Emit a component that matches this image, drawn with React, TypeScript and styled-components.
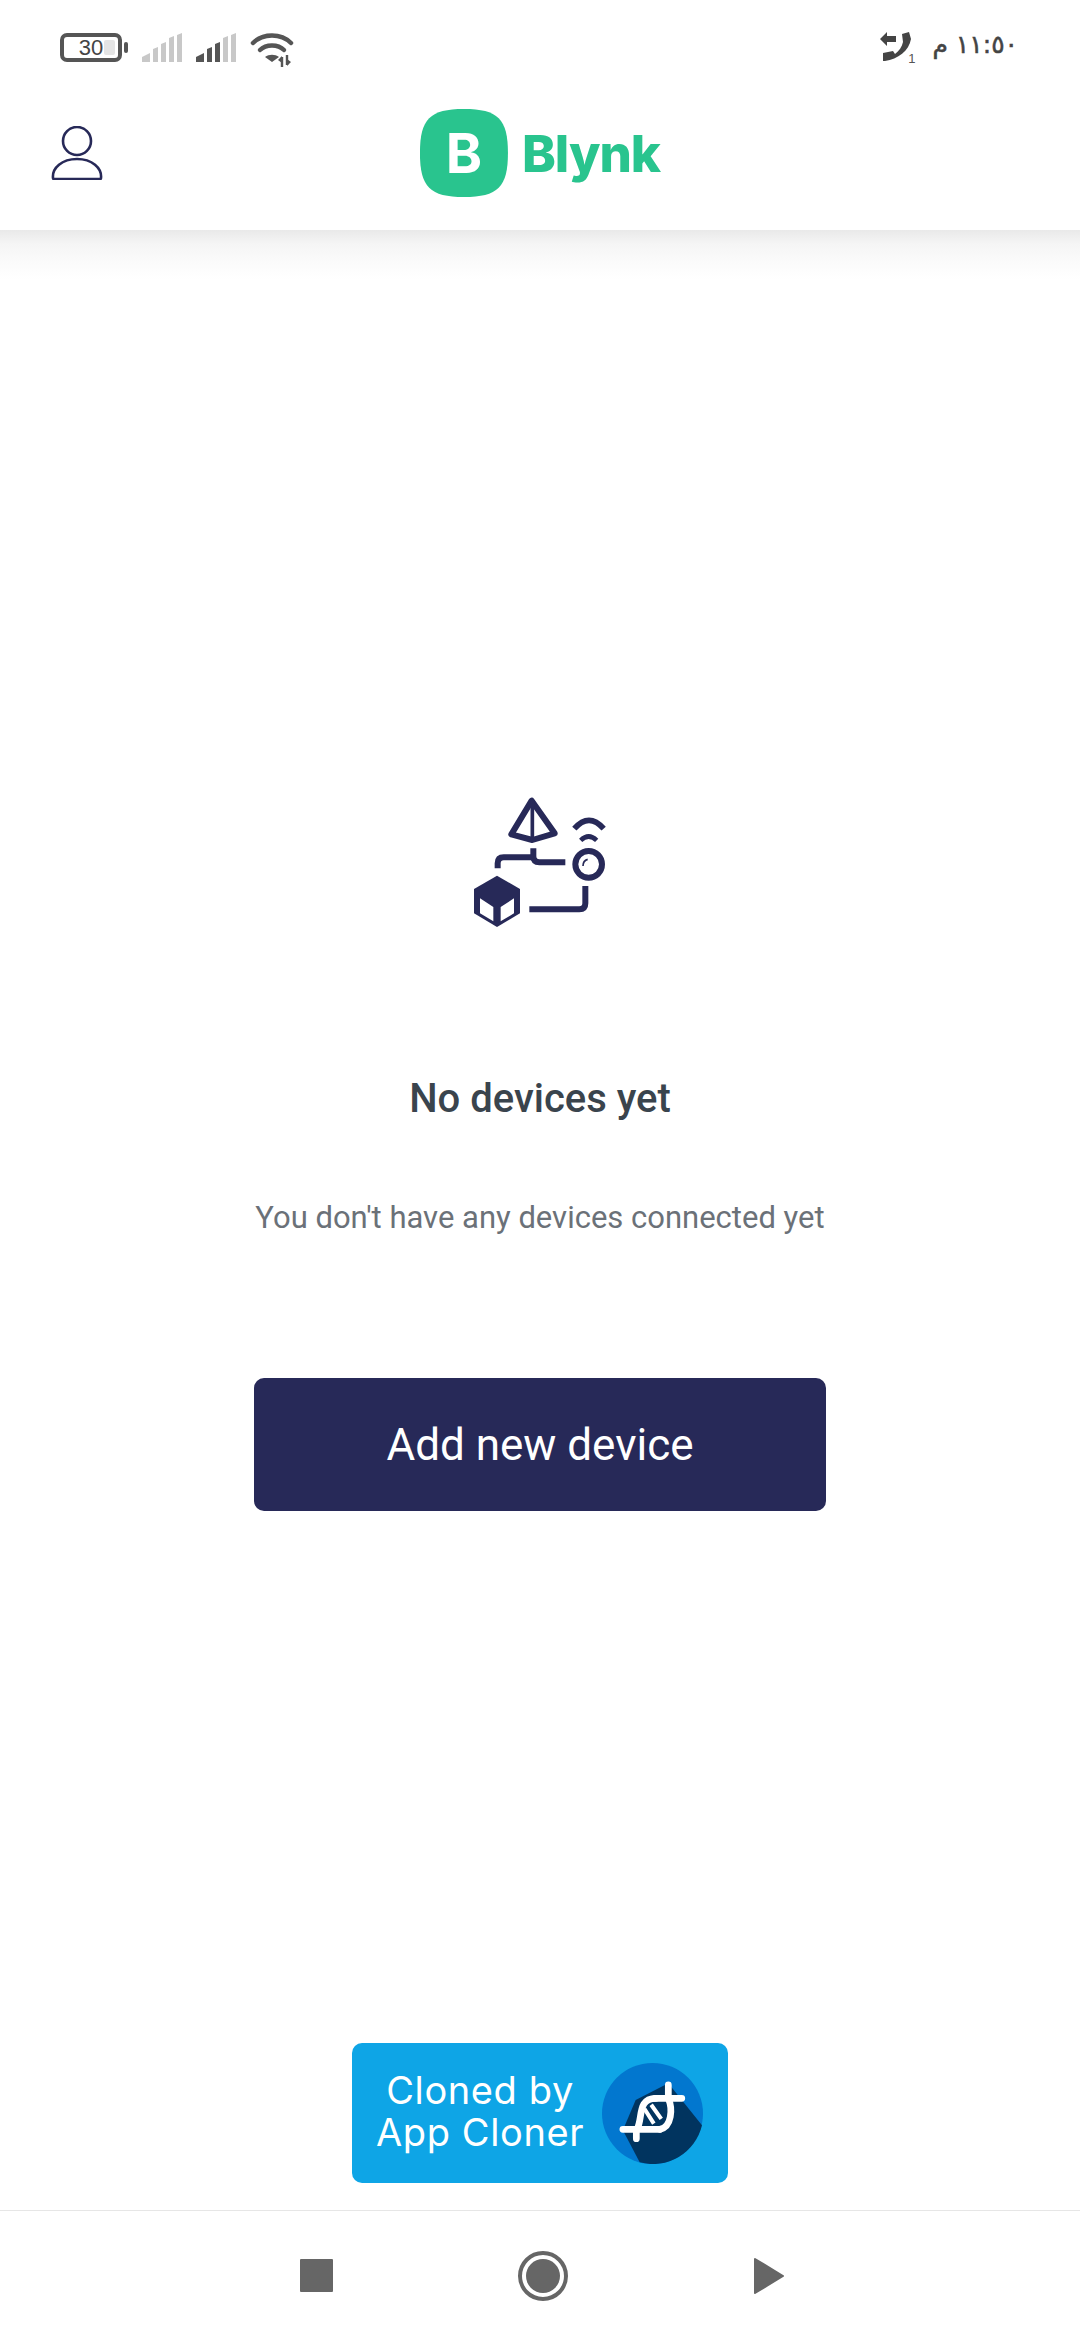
import styled, { createGlobalStyle } from 'styled-components'

const GlobalStyle = createGlobalStyle`
  html, body {
    margin: 0;
    padding: 0;
    background: #ffffff;
  }
  body {
    font-family: Roboto, "Liberation Sans", sans-serif;
  }
`

const Screen = styled.div`
  width: 1080px;
  height: 2340px;
  display: flex;
  flex-direction: column;
  background: #ffffff;
  overflow: hidden;
`

const StatusBar = styled.div`
  height: 90px;
  flex-shrink: 0;
  display: flex;
  justify-content: space-between;
  padding: 30px 62px 0 60px;
  box-sizing: border-box;
`

const StatusIcons = styled.div`
  display: flex;
  align-items: flex-start;
  gap: 14px;
  height: 40px;
  padding-top: 3px;
`

const BatteryBody = styled.div`
  position: relative;
  width: 62px;
  height: 29px;
  box-sizing: border-box;
  border: 4px solid #555555;
  border-radius: 7px;
  display: flex;
  align-items: center;
  justify-content: center;
  font-size: 22px;
  color: #444444;
  font-family: "Liberation Sans", sans-serif;
`

const BatteryFill = styled.div`
  position: absolute;
  top: 3px;
  bottom: 3px;
  right: 3px;
  width: 11px;
  background: #e4e4e4;
  border-radius: 2px;
`

const BatteryLevel = styled.span`
  position: relative;
  line-height: 1;
`

const BatteryCap = styled.div`
  width: 4px;
  height: 11px;
  margin: 9px 0 0 -12px;
  background: #555555;
  border-radius: 2px;
`

const Clock = styled.div`
  display: flex;
  align-items: flex-start;
  gap: 20px;
  color: #444444;
`

const CallBox = styled.div`
  position: relative;
  width: 32px;
  height: 30px;
  margin-top: 2px;
`

const SimIndex = styled.span`
  position: absolute;
  right: -3px;
  bottom: -3px;
  font-family: "Liberation Sans", sans-serif;
  font-size: 13px;
  line-height: 13px;
  color: #555555;
`

const ClockText = styled.span`
  font-family: "DejaVu Sans", sans-serif;
  font-size: 25px;
  line-height: 24px;
  margin-top: 3px;
  -webkit-text-stroke: 0.5px #444444;
`

const Header = styled.header`
  height: 140px;
  flex-shrink: 0;
  display: flex;
  align-items: flex-start;
  justify-content: center;
  position: relative;
  background: #ffffff;
`

const ProfileButton = styled.div`
  position: absolute;
  left: 51px;
  top: 36px;
  width: 52px;
  height: 54px;
`

const Logo = styled.div`
  display: flex;
  align-items: center;
  gap: 14px;
  margin-top: 19px;
  height: 88px;
`

const LogoMark = styled.div`
  width: 88px;
  height: 88px;
  background: #29c48e;
  clip-path: path('M44 0 C78 0 88 10 88 44 C88 78 78 88 44 88 C10 88 0 78 0 44 C0 10 10 0 44 0 Z');
  display: flex;
  align-items: center;
  justify-content: center;
  color: #ffffff;
  font-family: Inter, Roboto, sans-serif;
  font-weight: 700;
  font-size: 55px;
  line-height: 1;
`

const LogoName = styled.div`
  color: #29c48e;
  font-family: Inter, Roboto, sans-serif;
  font-weight: 800;
  font-size: 51px;
  letter-spacing: -1px;
  line-height: 1;
`

const Main = styled.main`
  flex: 1;
  display: flex;
  flex-direction: column;
  align-items: center;
  padding-top: 550px;
  background: linear-gradient(#e9e9e9 0, #f5f5f5 14px, #fbfbfb 32px, #ffffff 50px) top / 100% 50px no-repeat;
`

const EmptyIllustration = styled.div`
  width: 180px;
  height: 160px;
`

const Title = styled.h1`
  margin: 137px 0 0;
  font-size: 40px;
  line-height: 44px;
  font-weight: 500;
  color: #3a444d;
`

const Subtitle = styled.p`
  margin: 79px 0 0;
  font-size: 31px;
  line-height: 36px;
  font-weight: 400;
  color: #6b7178;
`

const AddButton = styled.button`
  width: 572px;
  height: 133px;
  margin-top: 142px;
  border: none;
  border-radius: 10px;
  background: #272958;
  color: #ffffff;
  font-family: inherit;
  font-size: 44px;
  font-weight: 400;
`

const ClonerBanner = styled.div`
  margin-top: auto;
  margin-bottom: 27px;
  width: 376px;
  height: 140px;
  box-sizing: border-box;
  background: #0ea5e6;
  border-radius: 10px;
  display: flex;
  align-items: center;
  justify-content: space-between;
  padding: 0 25px 0 24px;
`

const ClonerText = styled.div`
  color: #ffffff;
  font-family: Inter, Roboto, sans-serif;
  font-size: 38px;
  line-height: 42px;
  text-align: center;
  letter-spacing: 0.6px;
  margin-top: -4px;
`

const NavBar = styled.nav`
  height: 130px;
  flex-shrink: 0;
  box-sizing: border-box;
  border-top: 1px solid #e6e6e6;
  padding-left: 5px;
  display: flex;
  align-items: center;
  justify-content: center;
`

const NavSlot = styled.div`
  width: 226px;
  display: flex;
  justify-content: center;
`

const StopIcon = styled.div`
  width: 33px;
  height: 33px;
  background: #666666;
  border-radius: 1px;
`

const HomeIcon = styled.div`
  width: 50px;
  height: 50px;
  box-sizing: border-box;
  border: 4px solid #666666;
  border-radius: 50%;
  padding: 4px;
`

const HomeDot = styled.div`
  width: 100%;
  height: 100%;
  border-radius: 50%;
  background: #666666;
`

const Signal = ({ active }: { active: number }) => (
  <svg width="40" height="29" viewBox="0 0 40 29">
    {[
      'M0 29 V24 L8 20 V29 Z',
      'M11 29 V16 L16 14 V29 Z',
      'M19 29 V11 L24 9 V29 Z',
      'M27 29 V5 L32 3 V29 Z',
      'M35 29 V2 L40 0 V29 Z',
    ].map((d, i) => (
      <path key={d} d={d} fill={i < active ? '#555555' : '#c8c8c8'} />
    ))}
  </svg>
)

const WifiIcon = () => (
  <svg width="46" height="34" viewBox="0 0 46 34" fill="none">
    <path d="M3 10 C13 0 31 0 41 10" stroke="#555555" strokeWidth="4.5" strokeLinecap="round" />
    <path d="M10 17 C16 11 28 11 34 17" stroke="#555555" strokeWidth="4.5" strokeLinecap="round" />
    <path d="M22 29 L15 24 C19 21 25 21 29 24 Z" fill="#555555" />
    <path d="M32 34 V24 M37 22 V32" stroke="#555555" strokeWidth="2.4" />
    <path d="M28 27 L32 23 L32 30 Z M41 29 L37 33 L37 26 Z" fill="#555555" />
  </svg>
)

const CallIcon = () => (
  <svg width="32" height="30" viewBox="0 0 32 30">
    <path
      d="M22 2 L29 0 L31 7 C29 19 18 27 5 29 L3 29 L3 21 L13 19 L15 22 C19 19 22 15 23 10 Z"
      fill="#444444"
    />
    <path d="M0 7 L7 0 V4 H16 V10 H7 V14 Z" fill="#444444" />
  </svg>
)

const ProfileIcon = () => (
  <svg width="52" height="54" viewBox="0 0 52 54" fill="none" stroke="#272958" strokeWidth="2.6">
    <circle cx="26" cy="15" r="14" />
    <path d="M2 52 C1 42 11 33 26 33 C41 33 51 42 50 52 Q50 53 49 53 L3 53 Q2 53 2 52 Z" />
  </svg>
)

const DevicesIllustration = () => (
  <svg width="180" height="160" viewBox="0 0 540 480" fill="none" stroke="#272958" strokeWidth="18">
    <path d="M245 62 L184 163 L247 180 L314 160 Z" strokeWidth="18" strokeLinejoin="round" />
    <path d="M247 60 V180" strokeWidth="11" />
    <path d="M250 205 V229 Q250 247 268 247 H346" />
    <path d="M250 232 H161 Q143 232 143 250 V265" />
    <path d="M406 318 V370 Q406 388 388 388 H238" />
    <circle cx="416" cy="253" r="40" />
    <path d="M399 258 Q399 242 413 238" strokeWidth="5" />
    <path d="M373 146 Q417 96 461 146" strokeWidth="17" />
    <path d="M392 181 Q416 158 440 181" strokeWidth="14" />
    <path d="M141 287 L210 327 V400 L141 441 L72 400 V327 Z" fill="#272958" stroke="none" />
    <path d="M90 355 L130 381 V424 L90 400 Z M192 355 L152 381 V424 L192 400 Z" fill="#ffffff" stroke="none" />
  </svg>
)

const ClonerBadge = () => (
  <svg width="101" height="101" viewBox="0 0 300 300">
    <circle cx="150" cy="150" r="150" fill="#0277cf" />
    <path d="M197 60 L297 185 A150 150 0 0 1 112 295 L62 200 L100 110 Z" fill="#01345f" />
    <g fill="none" stroke="#ffffff" strokeLinecap="round">
      <path d="M157 105 H237 M62 197 H172" strokeWidth="20" />
      <path d="M197 65 V105 M102 197 V225" strokeWidth="20" />
      <path d="M104 197 C122 165 104 105 160 105" strokeWidth="20" />
      <path d="M172 197 C208 190 210 135 197 105" strokeWidth="20" />
      <path d="M126 136 L154 180 M146 124 L176 166" strokeWidth="12" strokeLinecap="butt" />
    </g>
  </svg>
)

const BackIcon = () => (
  <svg width="32" height="38" viewBox="0 0 32 38">
    <path d="M2 2 L30 19 L2 36 Z" fill="#666666" stroke="#666666" strokeWidth="2" strokeLinejoin="round" />
  </svg>
)

export default function App() {
  return (
    <Screen>
      <GlobalStyle />
      <StatusBar>
        <StatusIcons>
          <BatteryBody>
            <BatteryFill />
            <BatteryLevel>30</BatteryLevel>
          </BatteryBody>
          <BatteryCap />
          <Signal active={0} />
          <Signal active={3} />
          <WifiIcon />
        </StatusIcons>
        <Clock>
          <CallBox>
            <CallIcon />
            <SimIndex>1</SimIndex>
          </CallBox>
          <ClockText dir="rtl">١١:٥٠ م</ClockText>
        </Clock>
      </StatusBar>
      <Header>
        <ProfileButton>
          <ProfileIcon />
        </ProfileButton>
        <Logo>
          <LogoMark>B</LogoMark>
          <LogoName>Blynk</LogoName>
        </Logo>
      </Header>
      <Main>
        <EmptyIllustration>
          <DevicesIllustration />
        </EmptyIllustration>
        <Title>No devices yet</Title>
        <Subtitle>You don't have any devices connected yet</Subtitle>
        <AddButton>Add new device</AddButton>
        <ClonerBanner>
          <ClonerText>
            Cloned by
            <br />
            App Cloner
          </ClonerText>
          <ClonerBadge />
        </ClonerBanner>
      </Main>
      <NavBar>
        <NavSlot>
          <StopIcon />
        </NavSlot>
        <NavSlot>
          <HomeIcon>
            <HomeDot />
          </HomeIcon>
        </NavSlot>
        <NavSlot>
          <BackIcon />
        </NavSlot>
      </NavBar>
    </Screen>
  )
}
